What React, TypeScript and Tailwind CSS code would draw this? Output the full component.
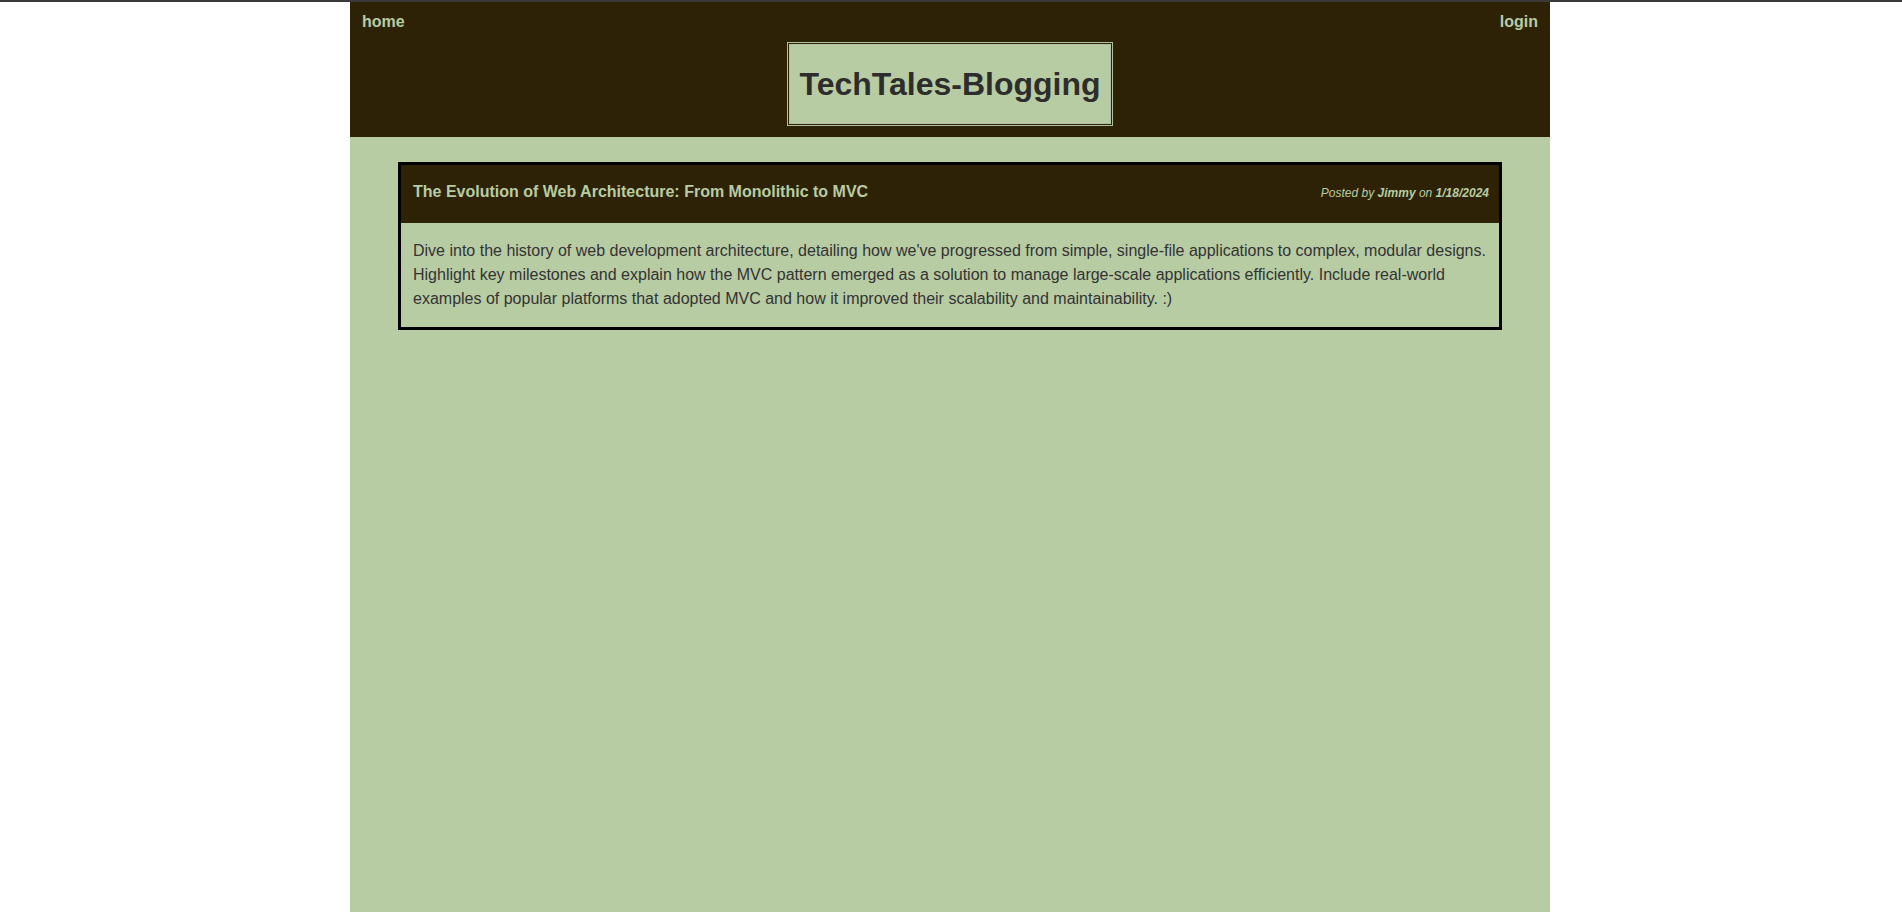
export default function App() {
  return (
    <div className="min-h-[912px] bg-white border-t-2 border-[#3a3a3a] font-['Liberation_Sans',Arial,sans-serif]">
      <div className="w-[1200px] ml-[350px] min-h-[910px] bg-[#b8cca4]">
        <header className="bg-[#2d2206] h-[135px] px-3 pt-[10px] flex flex-col">
          <nav className="flex justify-between text-[16px] font-bold text-[#b8cca4] leading-[20px]">
            <a href="#">home</a>
            <a href="#">login</a>
          </nav>
          <div className="flex justify-center mt-[10px]">
            <h1 className="border-[3px] border-double border-[#b0c0a0] bg-[#b8cca4] bg-clip-padding px-[9px] h-[84px] flex items-center text-[32px] font-bold text-[#2d2d2d]">
              TechTales-Blogging
            </h1>
          </div>
        </header>

        <main className="px-[48px] pt-[25px]">
          <article className="border-[3px] border-black">
            <div className="bg-[#2d2206] h-[58px] pl-[12px] pr-[10px] flex justify-between items-center text-[#b8cca4]">
              <h2 className="text-[16px] font-bold -mt-[4px]">
                The Evolution of Web Architecture: From Monolithic to MVC
              </h2>
              <p className="text-[12px] italic -mt-[2px]">
                Posted by <b>Jimmy</b> on <b>1/18/2024</b>
              </p>
            </div>
            <div className="px-[12px] pt-[16px] pb-[16px] text-[16px] leading-[24px] text-[#333333]">
              Dive into the history of web development architecture, detailing how we've progressed from simple,
              single-file applications to complex, modular designs. Highlight key milestones and explain how the MVC
              pattern emerged as a solution to manage large-scale applications efficiently. Include real-world examples
              of popular platforms that adopted MVC and how it improved their scalability and maintainability. :)
            </div>
          </article>
        </main>
      </div>
    </div>
  );
}
